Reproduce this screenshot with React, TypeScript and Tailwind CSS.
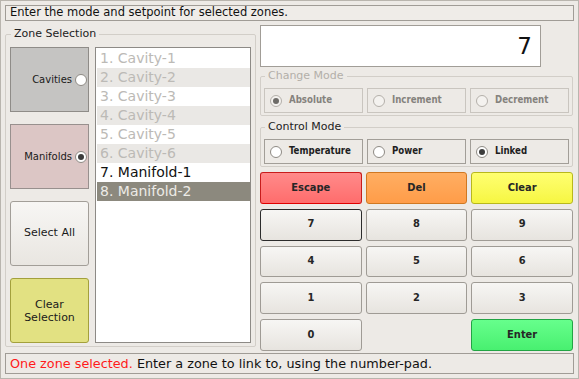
import React from 'react'

const font = { fontFamily: '"DejaVu Sans", "Liberation Sans", sans-serif' }
// the heavier labels in the screenshot are narrow bold
const cond = 'font-bold font-stretch-condensed [font-family:"DejaVu_Sans_Condensed","DejaVu_Sans",sans-serif]'

function Radio({ checked, disabled }: { checked?: boolean; disabled?: boolean }) {
  return (
    <span
      className={`flex h-[12px] w-[12px] shrink-0 items-center justify-center rounded-full border ${
        disabled ? 'border-[#b4b0aa] bg-[#f4f2ef]' : 'border-[#8e8a84] bg-white'
      }`}
    >
      {checked && (
        <span className={`h-[6px] w-[6px] rounded-full ${disabled ? 'bg-[#6e6c68]' : 'bg-[#3c3c3c]'}`} />
      )}
    </span>
  )
}

function ModeButton({ label, checked, disabled }: { label: string; checked?: boolean; disabled?: boolean }) {
  return (
    <div
      className={`flex items-center gap-[7px] border pl-[5px] text-[9.6px] ${cond} ${
        disabled ? 'border-[#c9c5bf] text-[#85827d]' : 'border-[#a29e98] text-[#1e1e1e]'
      }`}
    >
      <Radio checked={checked} disabled={disabled} />
      <span>{label}</span>
    </div>
  )
}

function Frame({
  title,
  muted,
  className,
  children,
}: {
  title: string
  muted?: boolean
  className?: string
  children: React.ReactNode
}) {
  return (
    <fieldset className={`rounded-[2px] border border-[#d2cec8] ${className ?? ''}`}>
      <legend
        className={`ml-[1px] px-[3px] text-[11px] leading-[12px] ${muted ? 'text-[#b3afa9]' : 'text-[#222]'}`}
      >
        {title}
      </legend>
      {children}
    </fieldset>
  )
}

const keyBase = `flex items-center justify-center rounded-[3px] border text-[11px] text-[#262626] ${cond}`
const plainKey = `${keyBase} border-[#9f9b95] bg-gradient-to-b from-[#f7f6f4] to-[#e7e4df]`

const zones = [
  { name: '1. Cavity-1', dim: true },
  { name: '2. Cavity-2', dim: true },
  { name: '3. Cavity-3', dim: true },
  { name: '4. Cavity-4', dim: true },
  { name: '5. Cavity-5', dim: true },
  { name: '6. Cavity-6', dim: true },
  { name: '7. Manifold-1', dim: false },
  { name: '8. Manifold-2', dim: false, selected: true },
]

export default function App() {
  return (
    <div
      className="flex h-[379px] w-[579px] flex-col border border-[#b9b5ae] bg-[#edeae6] px-[4px] pt-[4px]"
      style={font}
    >
      <div className="flex h-[16px] items-center border border-[#a09c96] bg-[#efece8] pl-[4px] text-[11.5px] text-[#111]">
        Enter the mode and setpoint for selected zones.
      </div>

      <div className="mt-[4px] flex h-[326px] gap-[4px]">
        <Frame title="Zone Selection" className="mt-[3px] h-[319px] w-[251px] px-[4px] pt-[7px]">
          <div className="flex h-[296px] gap-[6px]">
            <div className="flex w-[79px] flex-col gap-[12px] text-[10px] text-[#1a1a1a]">
              <div className="flex flex-1 items-center justify-end gap-[3px] border border-[#8f8c88] bg-[#c5c4c2] pr-[1px]">
                <span>Cavities</span>
                <Radio />
              </div>
              <div className="flex flex-1 items-center justify-end gap-[3px] border border-[#98908e] bg-[#dcc6c5] pr-[1px]">
                <span>Manifolds</span>
                <Radio checked />
              </div>
              <div className="flex flex-1 items-center justify-center rounded-[3px] border border-[#a29e98] bg-gradient-to-b from-[#f7f6f4] to-[#e9e6e1] text-[11px]">
                Select All
              </div>
              <div className="flex flex-1 items-center justify-center rounded-[3px] border border-[#a3a03c] bg-[#e2e182] text-center text-[11px] leading-[13px]">
                Clear
                <br />
                Selection
              </div>
            </div>
            <div className="flex-1 border border-[#8d8a86] bg-white pl-[1px] pt-[1px]">
              {zones.map((z, i) => (
                <div
                  key={z.name}
                  className={`h-[19px] pl-[3px] text-[14px] leading-[19px] ${
                    z.selected
                      ? 'bg-[#8c897e] text-[#ecebe6]'
                      : z.dim
                        ? `${i % 2 ? 'bg-[#eae8e5]' : 'bg-white'} text-[#bcbab6]`
                        : 'bg-white text-[#111]'
                  }`}
                >
                  {z.name}
                </div>
              ))}
            </div>
          </div>
        </Frame>

        <div className="flex w-[313px] flex-col">
          <div className="flex h-[42px] w-[281px] items-center justify-end border border-[#a19d97] bg-white pr-[8px] text-[23px] text-[#111]">
            7
          </div>

          <Frame title="Change Mode" muted className="mt-[3px] px-[3px] pb-[2px] pt-[6px]">
            <div className="grid h-[25px] grid-cols-3 gap-[4px]">
              <ModeButton label="Absolute" checked disabled />
              <ModeButton label="Increment" disabled />
              <ModeButton label="Decrement" disabled />
            </div>
          </Frame>

          <Frame title="Control Mode" className="mt-[5px] px-[3px] pb-[2px] pt-[6px]">
            <div className="grid h-[25px] grid-cols-3 gap-[4px]">
              <ModeButton label="Temperature" />
              <ModeButton label="Power" />
              <ModeButton label="Linked" checked />
            </div>
          </Frame>

          <div className="mt-[5px] grid flex-1 grid-cols-3 grid-rows-5 gap-x-[4px] gap-y-[5px]">
            <div className={`${keyBase} border-[#c81c1c] border-b-[#e00000] bg-gradient-to-b from-[#ff8a8a] to-[#ff6c6c]`}>
              Escape
            </div>
            <div className={`${keyBase} border-[#d07822] bg-gradient-to-b from-[#ffae62] to-[#ff9c48]`}>Del</div>
            <div className={`${keyBase} border-[#b8b81c] bg-gradient-to-b from-[#ffff70] to-[#f6f640]`}>Clear</div>
            <div className={`${keyBase} border-[#2c2c2c] bg-gradient-to-b from-[#f7f6f4] to-[#e7e4df]`}>7</div>
            <div className={plainKey}>8</div>
            <div className={plainKey}>9</div>
            <div className={plainKey}>4</div>
            <div className={plainKey}>5</div>
            <div className={plainKey}>6</div>
            <div className={plainKey}>1</div>
            <div className={plainKey}>2</div>
            <div className={plainKey}>3</div>
            <div className={plainKey}>0</div>
            <div />
            <div className={`${keyBase} border-[#22a444] bg-gradient-to-b from-[#66ff8c] to-[#48f070]`}>Enter</div>
          </div>
        </div>
      </div>

      <div className="mt-[2px] flex h-[21px] items-center border border-[#a09c96] pl-[4px] text-[12.8px] text-[#111]">
        <span className="text-[#ff1a1a]">One zone selected.</span>
        <span>&nbsp;Enter a zone to link to, using the number-pad.</span>
      </div>
    </div>
  )
}
